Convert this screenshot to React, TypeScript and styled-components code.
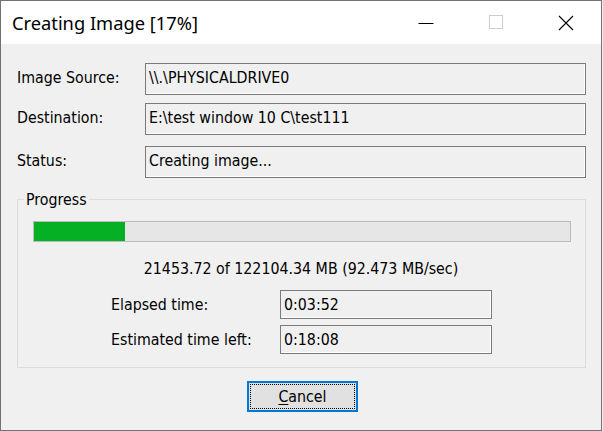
import React from "react";
import styled, { createGlobalStyle } from "styled-components";

const Global = createGlobalStyle`
  html, body { margin: 0; padding: 0; background: #f0f0f0; }
  #root { width: 603px; height: 431px; }
`;

const UI_FONT = `Tahoma, "DejaVu Sans Condensed", "DejaVu Sans", sans-serif`;

const Window = styled.div`
  box-sizing: border-box;
  width: 602px;
  height: 431px;
  border: 1px solid #727272;
  background: #f0f0f0;
  display: flex;
  flex-direction: column;
  font-family: ${UI_FONT};
  font-size: 15.8px;
  color: #000;
`;

const TitleBar = styled.div`
  height: 43px;
  flex: none;
  background: #fff;
  display: flex;
  align-items: center;
  padding-left: 11px;
`;

const Title = styled.div`
  flex: 1;
  font-family: "Noto Sans", "Open Sans", sans-serif;
  font-size: 18.3px;
  color: #000;
  padding-bottom: 1px;
`;

const CaptionButton = styled.div`
  width: 70px;
  height: 43px;
  display: flex;
  align-items: center;
  justify-content: center;
`;

const Content = styled.div`
  flex: 1;
  display: flex;
  flex-direction: column;
  padding: 19px 15px 0 16px;
`;

const FieldRow = styled.div<{ $gap: number }>`
  display: grid;
  grid-template-columns: 128px 441px;
  align-items: start;
  margin-top: ${(p) => p.$gap}px;
`;

const Label = styled.div`
  padding-top: 5px;
  line-height: 19px;
  white-space: nowrap;
`;

const ValueBox = styled.div<{ $h?: number }>`
  box-sizing: border-box;
  height: ${(p) => p.$h ?? 32}px;
  border: 1px solid #7a7a7a;
  box-shadow: inset -1px -1px 0 #ffffff;
  padding: 4px 0 0 3px;
  line-height: 19px;
  white-space: nowrap;
  overflow: hidden;
`;

const Group = styled.fieldset`
  margin: 12px 0 0 0;
  padding: 0 14px 0 15px;
  border: 1px solid #dcdcdc;
  height: 178px;
  box-sizing: border-box;
  min-width: 0;
`;

const Legend = styled.legend`
  margin-left: -9px;
  padding: 0 2px;
  line-height: 19px;
`;

const Bar = styled.div`
  box-sizing: border-box;
  margin-top: 12px;
  height: 21px;
  border: 1px solid #bcbcbc;
  background: #e6e6e6;
  display: flex;
`;

const BarFill = styled.div`
  height: 100%;
  background: #06b025;
`;

const Stats = styled.div`
  margin-top: 17px;
  text-align: center;
  line-height: 19px;
  padding-right: 2px;
`;

const TimeRow = styled.div<{ $gap: number }>`
  display: grid;
  grid-template-columns: 169px 212px;
  margin-left: 78px;
  margin-top: ${(p) => p.$gap}px;
  align-items: start;
`;

const Footer = styled.div`
  display: flex;
  justify-content: center;
  margin-top: 13px;
  padding-left: 2px;
`;

const Button = styled.button`
  box-sizing: border-box;
  width: 111px;
  height: 31px;
  border: 2px solid #0078d7;
  background: #e1e1e1;
  padding: 1px;
  font-family: ${UI_FONT};
  font-size: 15.8px;
  color: #000;
  cursor: default;
`;

const FocusRect = styled.span`
  display: flex;
  align-items: center;
  justify-content: center;
  height: 100%;
  border: 1px dotted #000;
  box-sizing: border-box;
  padding-bottom: 1px;
  & u { text-decoration-thickness: 1px; text-underline-offset: 2px; }
`;

export default function App() {
  const pct = 17;
  return (
    <>
      <Global />
      <Window>
        <TitleBar>
          <Title>Creating Image [17%]</Title>
          <CaptionButton>
            <svg width="16" height="16" viewBox="0 0 16 16">
              <line x1="0.5" y1="8.5" x2="15.5" y2="8.5" stroke="#000" strokeWidth="1" />
            </svg>
          </CaptionButton>
          <CaptionButton>
            <svg width="15" height="15" viewBox="0 0 15 15">
              <rect x="0.5" y="0.5" width="13" height="13" fill="none" stroke="#cccccc" strokeWidth="1" />
            </svg>
          </CaptionButton>
          <CaptionButton>
            <svg width="16" height="16" viewBox="0 0 16 16">
              <path d="M1 1 L15 15 M15 1 L1 15" stroke="#000" strokeWidth="1.1" fill="none" />
            </svg>
          </CaptionButton>
        </TitleBar>
        <Content>
          <FieldRow $gap={0}>
            <Label>Image Source:</Label>
            <ValueBox>\\.\PHYSICALDRIVE0</ValueBox>
          </FieldRow>
          <FieldRow $gap={8}>
            <Label>Destination:</Label>
            <ValueBox>E:\test window 10 C\test111</ValueBox>
          </FieldRow>
          <FieldRow $gap={11}>
            <Label>Status:</Label>
            <ValueBox>Creating image...</ValueBox>
          </FieldRow>
          <Group>
            <Legend>Progress</Legend>
            <Bar>
              <BarFill style={{ width: `${pct}%` }} />
            </Bar>
            <Stats>21453.72 of 122104.34 MB (92.473 MB/sec)</Stats>
            <TimeRow $gap={12}>
              <Label>Elapsed time:</Label>
              <ValueBox $h={29}>0:03:52</ValueBox>
            </TimeRow>
            <TimeRow $gap={6}>
              <Label>Estimated time left:</Label>
              <ValueBox $h={29}>0:18:08</ValueBox>
            </TimeRow>
          </Group>
          <Footer>
            <Button>
              <FocusRect>
                <span>
                  <u>C</u>ancel
                </span>
              </FocusRect>
            </Button>
          </Footer>
        </Content>
      </Window>
    </>
  );
}
